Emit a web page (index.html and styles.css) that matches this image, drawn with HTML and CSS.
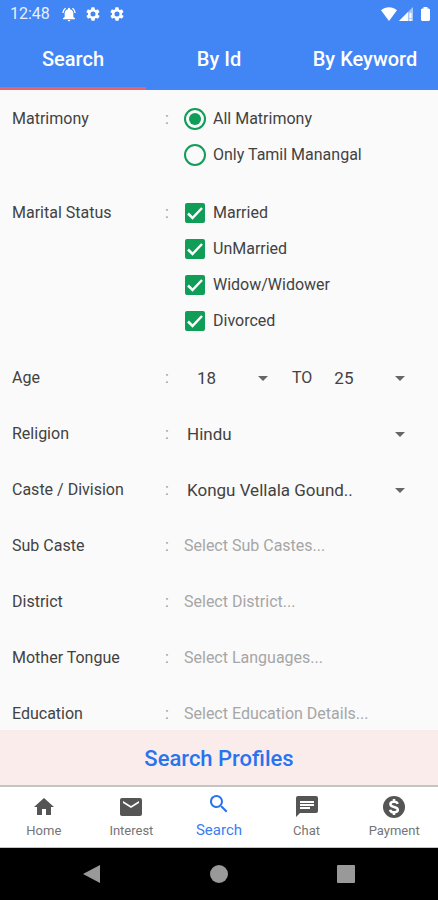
FILE: index.html
```html
<!DOCTYPE html>
<html lang="en">
<head>
<meta charset="utf-8">
<meta name="viewport" content="width=device-width, initial-scale=1">
<title>Search Profiles</title>
<link rel="stylesheet" href="styles.css">
</head>
<body>
<header class="top">
  <div class="status">
    <span class="clock">12:48</span>
    <svg class="status-icon" viewBox="0 0 24 24" aria-hidden="true"><path d="M7.600 4 6.200 2.600C3.800 4.400 2.200 7.300 2 10.500h2c.2-2.700 1.500-5 3.600-6.500zM20 10.500h2c-.2-3.200-1.800-6.100-4.200-7.900L16.400 4c2.100 1.500 3.500 3.800 3.600 6.500zM18.500 11c0-3.100-1.900-5.600-5-6.300V4a1.500 1.500 0 0 0-3 0v.7c-3.100.7-5 3.200-5 6.300v5.500l-2.500 2V20h18v-1.500l-2.500-2zM12 23c1.100 0 2-.9 2-2h-4c0 1.100.9 2 2 2z"/></svg>
    <svg class="status-icon" viewBox="0 0 24 24" aria-hidden="true"><path d="M19.400 13a7.500 7.500 0 0 0 0-2l2.100-1.600c.2-.2.300-.4.100-.6l-2-3.500c-.1-.2-.4-.3-.6-.2l-2.500 1a7.300 7.300 0 0 0-1.700-1l-.4-2.600a.5.5 0 0 0-.5-.5h-4a.5.500 0 0 0-.5.500l-.4 2.600a7.700 7.700 0 0 0-1.700 1l-2.500-1c-.2-.1-.5 0-.6.2l-2 3.500c-.1.200-.1.500.1.600L4.500 11a7.500 7.500 0 0 0 0 2l-2.100 1.600c-.2.200-.2.400-.1.600l2 3.500c.1.200.4.300.6.200l2.500-1c.5.400 1.100.7 1.700 1l.4 2.600c0 .3.200.5.500.5h4c.3 0 .5-.2.500-.5l.4-2.600c.6-.3 1.200-.6 1.700-1l2.500 1c.2.100.5 0 .6-.2l2-3.500c.1-.2.100-.5-.1-.6zM12 15.800a3.800 3.800 0 1 1 0-7.600 3.800 3.800 0 0 1 0 7.600z"/></svg>
    <svg class="status-icon" viewBox="0 0 24 24" aria-hidden="true"><path d="M19.400 13a7.500 7.500 0 0 0 0-2l2.100-1.600c.2-.2.300-.4.100-.6l-2-3.500c-.1-.2-.4-.3-.6-.2l-2.500 1a7.300 7.300 0 0 0-1.700-1l-.4-2.600a.5.5 0 0 0-.5-.5h-4a.5.500 0 0 0-.5.500l-.4 2.600a7.700 7.700 0 0 0-1.700 1l-2.500-1c-.2-.1-.5 0-.6.2l-2 3.500c-.1.200-.1.500.1.600L4.500 11a7.500 7.500 0 0 0 0 2l-2.100 1.600c-.2.200-.2.400-.1.600l2 3.500c.1.200.4.300.6.200l2.500-1c.5.400 1.100.7 1.700 1l.4 2.600c0 .3.200.5.500.5h4c.3 0 .5-.2.500-.5l.4-2.600c.6-.3 1.200-.6 1.700-1l2.500 1c.2.100.5 0 .6-.2l2-3.500c.1-.2.100-.5-.1-.6zM12 15.800a3.800 3.800 0 1 1 0-7.600 3.800 3.800 0 0 1 0 7.600z"/></svg>
    <svg class="signals" viewBox="0 0 52 18" aria-hidden="true"><path d="M1 5.200C5.500 1.300 12.500 1.300 17 5.200L9 16z"/><path d="M19 16 33 2v14z" opacity=".55"/><path d="M19 16 28 7v9zM29.500 8h2v5h-2zM29.500 14h2v2h-2z"/><path d="M42 3.500h1.500V2h4v1.500H49l1 1V15l-1 1h-7l-1-1V4.500z"/></svg>
  </div>
  <nav class="tabs" aria-label="Search type">
    <a class="tab tab-active" href="#search">Search</a>
    <a class="tab" href="#id">By Id</a>
    <a class="tab" href="#keyword">By Keyword</a>
  </nav>
</header>

<main class="content">
  <form id="search" class="form">
    <div class="row row-group" role="group" aria-labelledby="l-mat">
      <span class="label" id="l-mat">Matrimony</span><span class="colon">:</span>
      <div class="options">
        <label class="option"><input class="radio" type="radio" name="matrimony" checked>All Matrimony</label>
        <label class="option"><input class="radio" type="radio" name="matrimony">Only Tamil Manangal</label>
      </div>
    </div>
    <div class="row row-group" role="group" aria-labelledby="l-status">
      <span class="label" id="l-status">Marital Status</span><span class="colon">:</span>
      <div class="options">
        <label class="option"><span class="tick"><input class="check" type="checkbox" checked><svg viewBox="0 0 20 20" aria-hidden="true"><path d="M3 10.500 7.500 15 17 5"/></svg></span>Married</label>
        <label class="option"><span class="tick"><input class="check" type="checkbox" checked><svg viewBox="0 0 20 20" aria-hidden="true"><path d="M3 10.500 7.500 15 17 5"/></svg></span>UnMarried</label>
        <label class="option"><span class="tick"><input class="check" type="checkbox" checked><svg viewBox="0 0 20 20" aria-hidden="true"><path d="M3 10.500 7.500 15 17 5"/></svg></span>Widow/Widower</label>
        <label class="option"><span class="tick"><input class="check" type="checkbox" checked><svg viewBox="0 0 20 20" aria-hidden="true"><path d="M3 10.500 7.500 15 17 5"/></svg></span>Divorced</label>
      </div>
    </div>
    <div class="row">
      <label class="label" for="age-from">Age</label><span class="colon">:</span>
      <div class="range">
        <div class="drop drop-from"><select id="age-from"><option>18</option></select></div>
        <label class="to" for="age-to">TO</label>
        <div class="drop drop-to"><select id="age-to"><option>25</option></select></div>
      </div>
    </div>
    <div class="row">
      <label class="label" for="religion">Religion</label><span class="colon">:</span>
      <div class="drop"><select id="religion"><option>Hindu</option></select></div>
    </div>
    <div class="row">
      <label class="label" for="caste">Caste / Division</label><span class="colon">:</span>
      <div class="drop"><select id="caste"><option>Kongu Vellala Gound..</option></select></div>
    </div>
    <div class="row">
      <label class="label" for="sub">Sub Caste</label><span class="colon">:</span>
      <input class="text" id="sub" type="text" placeholder="Select Sub Castes...">
    </div>
    <div class="row">
      <label class="label" for="district">District</label><span class="colon">:</span>
      <input class="text" id="district" type="text" placeholder="Select District...">
    </div>
    <div class="row">
      <label class="label" for="tongue">Mother Tongue</label><span class="colon">:</span>
      <input class="text" id="tongue" type="text" placeholder="Select Languages...">
    </div>
    <div class="row">
      <label class="label" for="education">Education</label><span class="colon">:</span>
      <input class="text" id="education" type="text" placeholder="Select Education Details...">
    </div>
  </form>
</main>

<button class="submit" type="submit" form="search">Search Profiles</button>

<nav class="bottom" aria-label="Main">
  <a class="item" href="#home"><svg viewBox="0 0 24 24" aria-hidden="true"><path d="M10 20v-6h4v6h5v-8h3L12 3 2 12h3v8z"/></svg>Home</a>
  <a class="item" href="#interest"><svg viewBox="0 0 24 24" aria-hidden="true"><path d="M21 3H3a2 2 0 0 0-2 2v14c0 1.100.9 2 2 2h18a2 2 0 0 0 2-2V5a2 2 0 0 0-2-2zm-1 5-8 5-8-5V6l8 5 8-5z"/></svg>Interest</a>
  <a class="item item-active" href="#search"><svg viewBox="0 0 24 24" aria-hidden="true"><path d="M15.500 14h-.8l-.3-.3A6.500 6.500 0 1 0 13.700 14.400l.3.300v.8l5 5 1.500-1.500zm-6 0a4.500 4.500 0 1 1 0-9 4.500 4.500 0 0 1 0 9z"/></svg>Search</a>
  <a class="item" href="#chat"><svg viewBox="0 0 24 24" aria-hidden="true"><path d="M21 1H3a2 2 0 0 0-2 2v19l4-4h16a2 2 0 0 0 2-2V3a2 2 0 0 0-2-2zM5 9h14v2H5zm10 5H5v-2h10zm4-6H5V6h14z"/></svg>Chat</a>
  <a class="item" href="#payment"><svg viewBox="0 0 24 24" aria-hidden="true"><circle cx="12" cy="12" r="11"/><path class="dollar" d="M15.700 8.800C15.200 7.300 13.900 6.700 12 6.700c-2.100 0-3.600.9-3.600 2.500 0 3.800 7.400 1.700 7.400 5.600 0 1.600-1.500 2.500-3.700 2.500-2.300 0-3.700-.9-4-2.600M12 4v3M12 17v3"/></svg>Payment</a>
</nav>

<div class="system">
  <button type="button" aria-label="Back"><svg viewBox="0 0 20 20" aria-hidden="true"><path d="M18 1v18L1 10z"/></svg></button>
  <button type="button" aria-label="Home screen"><svg viewBox="0 0 20 20" aria-hidden="true"><circle cx="10" cy="10" r="9"/></svg></button>
  <button type="button" aria-label="Recent apps"><svg viewBox="0 0 20 20" aria-hidden="true"><rect x="1" y="1" width="18" height="18" rx="1"/></svg></button>
</div>
</body>
</html>
```
FILE: styles.css
```css
* { box-sizing: border-box; }

body {
  margin: 0;
  height: 100vh;
  display: flex;
  flex-direction: column;
  background: #fafafa;
  color: #424242;
  font-family: Roboto, "Liberation Sans", sans-serif;
  font-size: 16px;
  line-height: 20px;
}

a { color: inherit; text-decoration: none; }

button, input, select {
  margin: 0;
  padding: 0;
  border: 0;
  background: none;
  color: inherit;
  font: inherit;
}

/* Header */
.top { flex: none; background: #4285f4; color: #fff; }

.status {
  display: flex;
  align-items: center;
  height: 28px;
  padding: 0 6px 0 10px;
}

.clock { margin-right: 11px; color: #e8f0fe; }
.status svg { fill: #fff; }
.status-icon { width: 16px; height: 16px; margin-right: 8px; }
.signals { width: 52px; height: 18px; margin-left: auto; }

.tabs { display: grid; grid-template-columns: repeat(3, 1fr); }

.tab {
  height: 62px;
  padding-top: 1px;
  border-bottom: 3px solid transparent;
  font-size: 20px;
  font-weight: 500;
  line-height: 60px;
  text-align: center;
  white-space: nowrap;
}

.tab-active { border-color: #e8636f; }

/* Form */
.content {
  flex: 1;
  min-height: 0;
  margin-bottom: 6px;
  overflow-y: auto;
  scrollbar-width: none;
}

.form { padding: 11px 33px 0 12px; }

.row {
  display: grid;
  grid-template-columns: 153px 19px 1fr;
  align-items: center;
  height: 56px;
}

.row-group {
  align-items: start;
  height: auto;
  margin-bottom: 22px;
  line-height: 36px;
}

.row-group + .row-group { margin-bottom: 11px; }

.colon { color: #9e9e9e; }

.option { display: flex; align-items: center; gap: 7px; height: 36px; }

.radio {
  appearance: none;
  width: 22px;
  height: 22px;
  padding: 3px;
  border: 2px solid #0f9d58;
  border-radius: 50%;
  background-clip: content-box;
}

.radio:checked { background-color: #0f9d58; }

.tick { display: grid; width: 22px; height: 20px; justify-items: center; }
.tick > * { grid-area: 1 / 1; width: 20px; height: 20px; }
.tick svg { pointer-events: none; fill: none; stroke: #fff; stroke-width: 2.5; }

.check {
  appearance: none;
  border: 2px solid #0f9d58;
  border-radius: 2px;
}

.check:checked { background: #0f9d58; }

.drop { display: flex; align-items: center; padding-left: 3px; }

.drop select {
  appearance: none;
  flex: 1;
  min-width: 0;
  font-size: 17px;
}

.drop::after {
  content: "";
  border: 5px solid transparent;
  border-top-color: #666;
  border-bottom: 0;
}

.range { display: flex; align-items: center; }
.drop-from { width: 84px; padding-left: 13px; }
.to { margin: 0 22px 0 24px; }
.drop-to { flex: 1; padding-left: 0; }

.text { width: 100%; }
.text::placeholder { color: #a6a6a6; }

/* Footer */
.submit {
  flex: none;
  height: 55px;
  padding-top: 3px;
  background: #fbecec;
  color: #2874ee;
  font-size: 22px;
  font-weight: 500;
}

.bottom {
  flex: none;
  display: grid;
  grid-template-columns: repeat(5, 1fr);
  height: 63px;
  border-top: 2px solid #c4c4c4;
  border-bottom: 1px solid #c4c4c4;
  background: #fff;
}

.item {
  display: flex;
  flex-direction: column;
  align-items: center;
  gap: 2px;
  padding-top: 8px;
  color: #757575;
  font-size: 13px;
}

.item svg { width: 24px; height: 24px; fill: #555; }
.item .dollar { fill: none; stroke: #fff; stroke-width: 2.5; }
.item-active { gap: 4px; padding-top: 5px; color: #3b7df0; font-size: 15px; }
.item-active svg { fill: #2874ee; }

.system {
  flex: none;
  display: flex;
  justify-content: space-around;
  align-items: center;
  height: 52px;
  padding: 0 29px;
  background: #000;
}

.system button { display: flex; }
.system svg { width: 20px; height: 20px; fill: #999; }
```
